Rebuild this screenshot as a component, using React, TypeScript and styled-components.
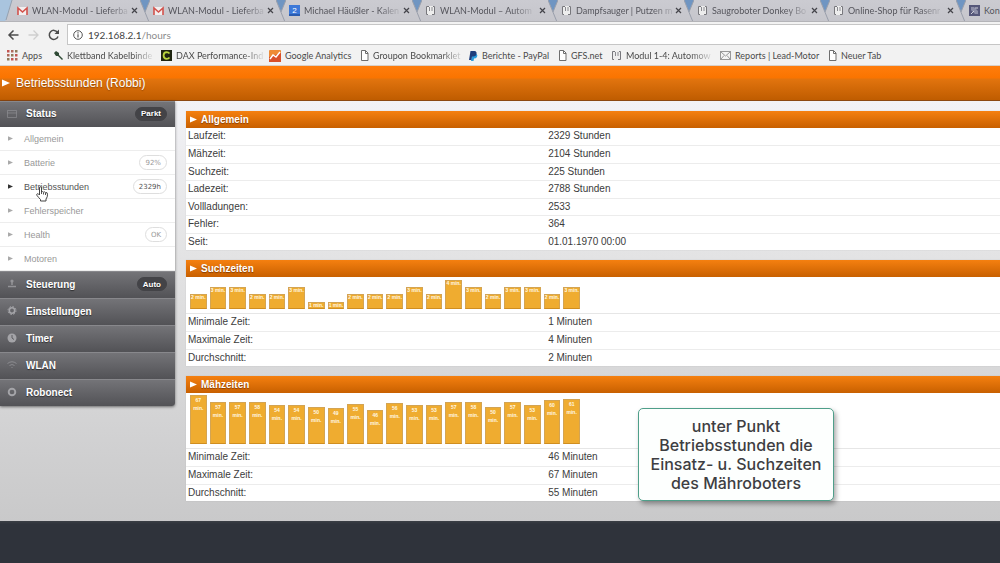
import React from "react";
import styled, { createGlobalStyle } from "styled-components";

const GlobalStyle = createGlobalStyle`
  * { box-sizing: border-box; }
  body { margin: 0; background: #30343c; font-family: "Liberation Sans", Arial, sans-serif; }
  button { font: inherit; border: 0; margin: 0; padding: 0; background: none; cursor: pointer; }
  a { color: inherit; text-decoration: none; }
`;

const ui = `Lato, "Noto Sans", sans-serif`;

const Page = styled.div`
  min-height: 100vh;
  display: flex;
  flex-direction: column;
  overflow-x: hidden;
`;

/* ---------- browser chrome ---------- */

const TabStrip = styled.div`
  height: 22px;
  padding-left: 4px;
  display: flex;
  overflow: hidden;
  background: linear-gradient(90deg, #a9c4de 0, #a9c4de 150px, #7499c4 280px, #7499c4 100%);
  border-bottom: 1px solid #b4b4b8;
  font-family: ${ui};
  font-size: 9px;
`;

const Tab = styled.div`
  flex: 0 0 136px;
  display: flex;
  align-items: center;
  background: linear-gradient(#cbcbd1, #c6c6cc);
  color: #55555c;
  & > svg:first-child { flex: none; margin-right: 3px; }
`;

const TabLink = styled.button`
  display: flex;
  align-items: center;
  gap: 4px;
  width: 109px;
  color: inherit;
  svg { flex: none; }
`;

const FadeText = styled.span<{ $faded: boolean }>`
  text-align: left;
  white-space: nowrap;
  line-height: 14px;
  mask-image: ${(p) => (p.$faded ? "linear-gradient(90deg, #000 calc(100% - 20px), rgba(0, 0, 0, 0.15))" : "none")};
`;

const CloseButton = styled.button`
  margin-left: 5px;
  display: flex;
  color: #44444a;
`;

const Toolbar = styled.div`
  height: 24px;
  padding: 2px 0 1px 7px;
  display: flex;
  align-items: center;
  background: #f2f2f2;
`;

const ToolButton = styled.button<{ $faded?: boolean }>`
  width: 20px;
  height: 14px;
  display: flex;
  align-items: center;
  color: ${(p) => (p.$faded ? "#cfcfcf" : "#4c4c4c")};
`;

const AddressBox = styled.label`
  flex: 1;
  height: 21px;
  padding-left: 5px;
  display: flex;
  align-items: center;
  gap: 5px;
  background: #fff;
  border: 1px solid #c6c6c6;
  border-right: 0;
  color: #555;
`;

const Address = styled.div`
  position: relative;
  flex: 1;
  font: 10px/14px ${ui};
  color: #8b8b8b;
  b { font-weight: 400; color: #444; }
`;

const AddressInput = styled.input`
  position: absolute;
  inset: 0;
  width: 100%;
  padding: 0;
  border: 0;
  outline: 0;
  font: inherit;
  background: transparent;
  color: transparent;
`;

const Bookmarks = styled.nav`
  height: 20px;
  padding-left: 7px;
  display: grid;
  grid-template-columns: 47px 107px 108px 91px 109px 89px 53px 109px 108px 1fr;
  align-items: center;
  background: #f2f2f2;
  border-bottom: 1px solid #d9d0c8;
  font: 9px/14px ${ui};
  color: #4a4a4a;
`;

const Bookmark = styled.a`
  display: flex;
  align-items: center;
  gap: 4px;
  min-width: 0;
  svg { flex: none; }
`;

/* ---------- page ---------- */

const TitleBar = styled.header`
  height: 35px;
  padding-left: 2px;
  display: flex;
  align-items: center;
  gap: 6px;
  background: linear-gradient(#ff7d0c 0, #fa7400 12px, #e2740e 13px, #bf5c00 100%);
  border-bottom: 1px solid #8c4812;
  color: #fff;
  h1 { margin: 0; font-size: 12px; font-weight: 400; line-height: 16px; text-shadow: 0 1px 1px rgba(90, 40, 0, 0.5); }
`;

const Body = styled.div`
  position: relative;
  display: flex;
  align-items: flex-start;
  background: linear-gradient(#f2f2f6, #e4e4e5 35%, #c9c9ca);
`;

const Sidebar = styled.nav`
  flex: 0 0 175px;
  border-radius: 0 0 3px 0;
  overflow: hidden;
  box-shadow: 0 1px 3px rgba(0, 0, 0, 0.5);
`;

const Section = styled.button<{ $first?: boolean }>`
  width: 100%;
  height: ${(p) => (p.$first ? "26px" : "27px")};
  padding: 0 8px 1px 6px;
  display: flex;
  align-items: center;
  background: linear-gradient(#757579, #525256);
  box-shadow: inset 0 1px 0 #88888c;
  color: #fff;
  font-size: 10px;
  font-weight: 700;
  text-shadow: 0 1px 1px rgba(0, 0, 0, 0.5);
  svg { flex: none; color: #a4a4a8; margin-right: 8px; }
`;

const Pill = styled.span<{ $dark?: boolean }>`
  margin-left: auto;
  height: ${(p) => (p.$dark ? "14px" : "15px")};
  padding: 0 5px;
  display: flex;
  align-items: center;
  border-radius: 8px;
  border: 1px solid ${(p) => (p.$dark ? "#434347" : "#dedede")};
  background: ${(p) => (p.$dark ? "#434347" : "#fff")};
  font: ${(p) => (p.$dark ? `700 8px "Liberation Sans", sans-serif` : `7px "DejaVu Sans", sans-serif`)};
`;

const MenuList = styled.ul`
  margin: 0;
  padding: 0;
  list-style: none;
  background: #fff;
`;

const MenuLink = styled.a<{ $active?: boolean }>`
  height: 24px;
  padding: 0 8px;
  display: flex;
  align-items: center;
  gap: 11px;
  border-bottom: 1px solid #ededed;
  color: ${(p) => (p.$active ? "#555" : "#999")};
  font-size: 9px;
  svg { color: ${(p) => (p.$active ? "#333" : "#aaa")}; }
`;

const Content = styled.main`
  flex: 1;
  min-width: 0;
  padding: 10px 0 20px 11px;
  display: flex;
  flex-direction: column;
  gap: 10px;
`;

const Panel = styled.section`
  background: #fff;
  box-shadow: 0 0 1px rgba(0, 0, 0, 0.15);
`;

const PanelTitle = styled.h2`
  margin: 0;
  height: 17px;
  padding-left: 4px;
  display: flex;
  align-items: center;
  gap: 4px;
  background: linear-gradient(#f58010, #c86000);
  color: #fff;
  font-size: 10px;
  text-shadow: 0 1px 1px rgba(80, 30, 0, 0.6);
`;

const Table = styled.table`
  width: 100%;
  border-collapse: collapse;
  table-layout: fixed;
  font-size: 10px;
  color: #3c3c3c;
  th, td {
    height: 17px;
    padding: 0 2px;
    text-align: left;
    font-weight: 400;
    line-height: 14px;
    border-bottom: 1px solid #ececec;
  }
  td { padding-left: 4px; }
  tr:nth-child(even) > * { height: 18px; }
  th { width: 44%; }
  tr:last-child > * { border-bottom: 0; }
`;

const Chart = styled.div<{ $height: number }>`
  height: ${(p) => p.$height}px;
  padding: 0 0 4px 4px;
  display: grid;
  grid-template-columns: repeat(20, minmax(0, 1fr));
  column-gap: 3px;
  align-items: end;
  width: 394px;
`;

const ChartFrame = styled.div`
  border-bottom: 1px solid #e6e6e6;
`;

const Bar = styled.div<{ $tall?: boolean }>`
  background: #efac30;
  border: 1px solid #d3a453;
  border-bottom-color: #d08e20;
  display: flex;
  justify-content: center;
  color: #fff8e4;
  font-size: 5px;
  font-weight: 700;
  line-height: ${(p) => (p.$tall ? "8px" : "5px")};
  text-align: center;
  white-space: nowrap;
`;

const Callout = styled.aside`
  position: absolute;
  left: 638px;
  top: 307px;
  width: 196px;
  padding: 8px 0 7px;
  background: #fdfffe;
  border: 1px solid #4f9f8a;
  border-radius: 5px;
  box-shadow: 2px 3px 5px rgba(0, 0, 0, 0.35);
  color: #3e3e42;
  font: 500 16px/19px Inter, sans-serif;
  text-align: center;
  white-space: nowrap;
`;

const Pointer = styled.svg`
  position: absolute;
  left: 36px;
  top: 85px;
`;

const Footer = styled.footer`
  flex: 1;
  min-height: 42px;
  background: linear-gradient(#3b3f45 0, #2f333b 3px);
`;

/* ---------- drawings ---------- */

const Notch = () => (
  <svg width="10" height="22" viewBox="0 0 10 22">
    <path d="M0 0H10L5 12Z" fill="#6f95c2" />
    <path d="M0 0L9 22M10 0L5 12" fill="none" stroke="#9a9fab" strokeWidth="1" />
  </svg>
);

const FirstEdge = () => (
  <svg width="10" height="22" viewBox="0 0 10 22">
    <path d="M0 0H8L2 20L0 22Z" fill="#a9c4de" />
    <path d="M8 0L2 20" fill="none" stroke="#94a1b0" />
  </svg>
);

const Gmail = () => (
  <svg width="11" height="10" viewBox="0 0 11 10">
    <rect x="1" y="1" width="9" height="8" fill="#f3eeee" />
    <path d="M1 9V2L5.500 6L10 2V9" fill="none" stroke="#d2524c" strokeWidth="1.600" />
  </svg>
);

const Calendar = () => (
  <svg width="11" height="11" viewBox="0 0 11 11">
    <rect width="11" height="11" fill="#3c78d8" />
    <rect y="9" width="11" height="2" fill="#2a5cb0" />
    <text x="5.500" y="8" fill="#fff" fontSize="8" textAnchor="middle" fontFamily="Liberation Sans">2</text>
  </svg>
);

const Brackets = () => (
  <svg width="11" height="11" viewBox="0 0 11 11">
    <rect x="1" y="1" width="9" height="9" fill="#ededed" />
    <path d="M4 1.500H1.500V9.500H3M7 9.500H9.500V1.500H8" fill="none" stroke="#77777c" />
    <path d="M4.500 2V6M7 2V6" stroke="#8a8a90" />
  </svg>
);

const Building = () => (
  <svg width="11" height="11" viewBox="0 0 11 11">
    <rect width="11" height="11" fill="#56587a" />
    <path d="M2 2H5L9 6V9H6L2 5Z" fill="#8d8fa8" />
    <path d="M2 9L5 6M6 3H9" stroke="#d0d0da" />
  </svg>
);

const Close = () => (
  <svg width="7" height="7" viewBox="0 0 7 7">
    <path d="M1 1L6 6M6 1L1 6" stroke="currentColor" strokeWidth="1.200" />
  </svg>
);

const Grid = () => (
  <svg width="11" height="11" viewBox="0 0 11 11">
    {[0, 4, 8].map((y, r) =>
      [0, 4, 8].map((x, c) => (
        <rect key={`${x}${y}`} x={x} y={y} width="2.500" height="2.500" fill={["#c25450", "#b06a5c", "#8f7a5a"][(r + c) % 3]} />
      ))
    )}
  </svg>
);

const Wrench = () => (
  <svg width="9" height="9" viewBox="0 0 9 9">
    <path d="M0 2L2 0L5 2L5 4L9 8L8 9L4 5L2 5Z" fill="#2f4a35" />
  </svg>
);

const LetterC = () => (
  <svg width="11" height="11" viewBox="0 0 11 11">
    <rect width="11" height="11" fill="#1e2410" />
    <path d="M8.500 3.500Q7.500 2.200 5.700 2.200Q2.600 2.300 2.600 5.500Q2.600 8.700 5.700 8.800Q7.500 8.800 8.500 7.500" fill="none" stroke="#b9d53c" strokeWidth="1.800" />
  </svg>
);

const Analytics = () => (
  <svg width="12" height="12" viewBox="0 0 12 12">
    <rect width="12" height="12" rx="1" fill="#ee8b36" />
    <path d="M0 7L12 3V12H0Z" fill="#d9502a" />
    <path d="M1 9L4 5L7 7L11 2" fill="none" stroke="#fff" strokeWidth="1.400" />
  </svg>
);

const Doc = () => (
  <svg width="9" height="11" viewBox="0 0 9 11">
    <path d="M1.500 .5H5.500L8 3V10.500H1.500Z" fill="#fff" stroke="#6e6e6e" />
    <path d="M5.500 .5V3.500H8" fill="none" stroke="#6e6e6e" />
  </svg>
);

const PayPal = () => (
  <svg width="9" height="10" viewBox="0 0 9 10">
    <path d="M3 3H7.500Q9 4 8 6Q7 7.500 5 7.500L4.500 10H2Z" fill="#2a9bdc" />
    <path d="M1.500 0H5.500Q8 .3 7.500 3Q7 5.500 4 5.500H3L2.300 9H0Z" fill="#1f3d7c" />
  </svg>
);

const Mail = () => (
  <svg width="11" height="9" viewBox="0 0 11 9">
    <rect x=".5" y=".5" width="10" height="8" fill="#f5f5f5" stroke="#999" />
    <path d="M1 1L5.500 5L10 1M1 8L4 4.500M10 8L7 4.500" fill="none" stroke="#999" />
  </svg>
);

const BackArrow = () => (
  <svg width="12" height="12" viewBox="0 0 12 12">
    <path d="M11.500 6H2.500M6.500 1.500L2 6L6.500 10.500" fill="none" stroke="currentColor" strokeWidth="1.500" />
  </svg>
);

const ForwardArrow = () => (
  <svg width="12" height="12" viewBox="0 0 12 12">
    <path d="M1.500 6H10.500M6.500 1.500L11 6L6.500 10.500" fill="none" stroke="currentColor" strokeWidth="1.300" />
  </svg>
);

const Reload = () => (
  <svg width="14" height="12" viewBox="0 0 14 12">
    <path d="M11 7.500A4.500 4.500 0 1 1 10.500 3.300" fill="none" stroke="currentColor" strokeWidth="1.500" />
    <path d="M12 .5V5H7.500Z" fill="currentColor" />
  </svg>
);

const Info = () => (
  <svg width="10" height="10" viewBox="0 0 10 10">
    <circle cx="5" cy="5" r="4.300" fill="none" stroke="currentColor" />
    <path d="M5 4.300V7.500M5 2.300V3.500" stroke="currentColor" strokeWidth="1.200" />
  </svg>
);

const Triangle = ({ size }: { size: number }) => (
  <svg width={size} height={size} viewBox="0 0 8 8">
    <path d="M0 0.500L8 4L0 7.500Z" fill="currentColor" />
  </svg>
);

const SectionIcon = ({ name }: { name: string }) => (
  <svg width="12" height="12" viewBox="0 0 12 12" fill="none" stroke="currentColor">
    {name === "list" && <path d="M1.500 2.500H10.500V9.500H1.500ZM1.500 5H10.500" opacity=".45" />}
    {name === "joystick" && (
      <g opacity=".75">
        <circle cx="6" cy="3" r="1.600" fill="currentColor" stroke="none" />
        <path d="M6 4V7M2 8.500H10" strokeWidth="1.500" />
      </g>
    )}
    {name === "gear" && (
      <>
        <circle cx="6" cy="5.500" r="2.700" strokeWidth="1.600" />
        <circle cx="6" cy="5.500" r="4" strokeWidth="1" strokeDasharray="1.600 1.540" />
      </>
    )}
    {name === "clock" && (
      <>
        <circle cx="6" cy="6" r="4.500" fill="currentColor" stroke="none" />
        <path d="M6 3V6L8 7.500" stroke="#5c5c60" />
      </>
    )}
    {name === "wifi" && <path d="M1.500 4.500Q6 1 10.500 4.500M3.500 6.500Q6 4.500 8.500 6.500M5.500 8.500H6.500" opacity=".6" />}
    {name === "ring" && <circle cx="6" cy="6" r="3.300" strokeWidth="1.900" />}
  </svg>
);

/* ---------- data ---------- */

const tabs = [
  { icon: <Gmail />, text: "WLAN-Modul - Lieferba", faded: true },
  { icon: <Gmail />, text: "WLAN-Modul - Lieferba", faded: true },
  { icon: <Calendar />, text: "Michael Häußler - Kalen", faded: true },
  { icon: <Brackets />, text: "WLAN-Modul – Autom", faded: true },
  { icon: <Brackets />, text: "Dampfsauger | Putzen m", faded: true },
  { icon: <Brackets />, text: "Saugroboter Donkey Bo", faded: true },
  { icon: <Brackets />, text: "Online-Shop für Rasenr", faded: true },
  { icon: <Building />, text: "Kon", faded: false },
];

const bookmarks = [
  { icon: <Grid />, text: "Apps" },
  { icon: <Wrench />, text: "Klettband Kabelbinde", faded: true },
  { icon: <LetterC />, text: "DAX Performance-Ind", faded: true },
  { icon: <Analytics />, text: "Google Analytics" },
  { icon: <Doc />, text: "Groupon Bookmarklet", faded: true },
  { icon: <PayPal />, text: "Berichte - PayPal" },
  { icon: <Doc />, text: "GFS.net" },
  { icon: <Brackets />, text: "Modul 1-4: Automow", faded: true },
  { icon: <Mail />, text: "Reports | Lead-Motor" },
  { icon: <Doc />, text: "Neuer Tab" },
];

const menu = [
  { text: "Allgemein" },
  { text: "Batterie", pill: "92%" },
  { text: "Betriebsstunden", pill: "2329h", active: true },
  { text: "Fehlerspeicher" },
  { text: "Health", pill: "OK" },
  { text: "Motoren" },
];

const sections = [
  { icon: "joystick", text: "Steuerung", pill: "Auto" },
  { icon: "gear", text: "Einstellungen" },
  { icon: "clock", text: "Timer" },
  { icon: "wifi", text: "WLAN" },
  { icon: "ring", text: "Robonect" },
];

const general = [
  ["Laufzeit:", "2329 Stunden"],
  ["Mähzeit:", "2104 Stunden"],
  ["Suchzeit:", "225 Stunden"],
  ["Ladezeit:", "2788 Stunden"],
  ["Vollladungen:", "2533"],
  ["Fehler:", "364"],
  ["Seit:", "01.01.1970 00:00"],
];

const search = [
  ["Minimale Zeit:", "1 Minuten"],
  ["Maximale Zeit:", "4 Minuten"],
  ["Durchschnitt:", "2 Minuten"],
];

const mowing = [
  ["Minimale Zeit:", "46 Minuten"],
  ["Maximale Zeit:", "67 Minuten"],
  ["Durchschnitt:", "55 Minuten"],
];

const searchBars = [2, 3, 3, 2, 2, 3, 1, 1, 2, 2, 2, 3, 2, 4, 3, 2, 3, 3, 2, 3];
const mowingBars = [67, 57, 57, 58, 54, 54, 50, 49, 55, 46, 56, 53, 53, 57, 58, 50, 57, 53, 60, 61];

const DataTable = ({ rows }: { rows: string[][] }) => (
  <Table>
    <tbody>
      {rows.map(([label, value]) => (
        <tr key={label}>
          <th scope="row">{label}</th>
          <td>{value}</td>
        </tr>
      ))}
    </tbody>
  </Table>
);

const Heading = ({ children }: { children: string }) => (
  <PanelTitle>
    <Triangle size={7} />
    {children}
  </PanelTitle>
);

export default function App() {
  return (
    <Page>
      <GlobalStyle />
      <TabStrip>
        {tabs.map((tab, i) => (
          <Tab key={i}>
            {i === 0 ? <FirstEdge /> : <Notch />}
            <TabLink type="button">
              {tab.icon}
              <FadeText $faded={tab.faded}>{tab.text}</FadeText>
            </TabLink>
            <CloseButton type="button" aria-label="Tab schließen">
              <Close />
            </CloseButton>
          </Tab>
        ))}
      </TabStrip>
      <Toolbar>
        <ToolButton type="button" aria-label="Zurück"><BackArrow /></ToolButton>
        <ToolButton type="button" aria-label="Vorwärts" $faded><ForwardArrow /></ToolButton>
        <ToolButton type="button" aria-label="Neu laden"><Reload /></ToolButton>
        <AddressBox>
          <Info />
          <Address>
            <b>192.168.2.1</b>/hours
            <AddressInput type="text" aria-label="Adresse" />
          </Address>
        </AddressBox>
      </Toolbar>
      <Bookmarks>
        {bookmarks.map((b) => (
          <Bookmark key={b.text} href="#">
            {b.icon}
            <FadeText $faded={!!b.faded}>{b.text}</FadeText>
          </Bookmark>
        ))}
      </Bookmarks>

      <TitleBar>
        <Triangle size={8} />
        <h1>Betriebsstunden (Robbi)</h1>
      </TitleBar>

      <Body>
        <Sidebar>
          <Section type="button" $first>
            <SectionIcon name="list" />
            Status
            <Pill $dark>Parkt</Pill>
          </Section>
          <MenuList>
            {menu.map((m) => (
              <li key={m.text}>
                <MenuLink href="#" $active={m.active}>
                  <Triangle size={5} />
                  {m.text}
                  {m.pill && <Pill>{m.pill}</Pill>}
                </MenuLink>
              </li>
            ))}
          </MenuList>
          {sections.map((s) => (
            <Section type="button" key={s.text}>
              <SectionIcon name={s.icon} />
              {s.text}
              {s.pill && <Pill $dark>{s.pill}</Pill>}
            </Section>
          ))}
        </Sidebar>

        <Content>
          <Panel>
            <Heading>Allgemein</Heading>
            <DataTable rows={general} />
          </Panel>
          <Panel>
            <Heading>Suchzeiten</Heading>
            <ChartFrame>
              <Chart $height={36}>
                {searchBars.map((v, i) => (
                  <Bar key={i} style={{ height: Math.round(v * 7.3) }}>{v} min.</Bar>
                ))}
              </Chart>
            </ChartFrame>
            <DataTable rows={search} />
          </Panel>
          <Panel>
            <Heading>Mähzeiten</Heading>
            <ChartFrame>
              <Chart $height={55}>
                {mowingBars.map((v, i) => (
                  <Bar key={i} $tall style={{ height: Math.round(v * 0.73) }}>
                    {v}
                    <br />
                    min.
                  </Bar>
                ))}
              </Chart>
            </ChartFrame>
            <DataTable rows={mowing} />
          </Panel>
        </Content>

        <Callout>
          unter Punkt
          <br />
          Betriebsstunden die
          <br />
          Einsatz- u. Suchzeiten
          <br />
          des Mähroboters
        </Callout>

        <Pointer width="13" height="16" viewBox="0 0 13 16">
          <path
            d="M3.500 9V2Q3.500 .7 4.500 .7Q5.500 .7 5.500 2V6Q6.300 5 7.500 6.200Q8.500 5.300 9.500 6.600Q11.500 6 11.500 8.200Q11.700 11 10 13V15H4.500V13.500Q2.500 11.500 .9 9.300Q.3 8 1.500 7.700Q2.500 7.600 3.500 9Z"
            fill="#fff"
            stroke="#444"
          />
          <path d="M5.500 6V8M7.500 6.500V8.500M9.500 7V9" stroke="#555" />
        </Pointer>
      </Body>
      <Footer />
    </Page>
  );
}
